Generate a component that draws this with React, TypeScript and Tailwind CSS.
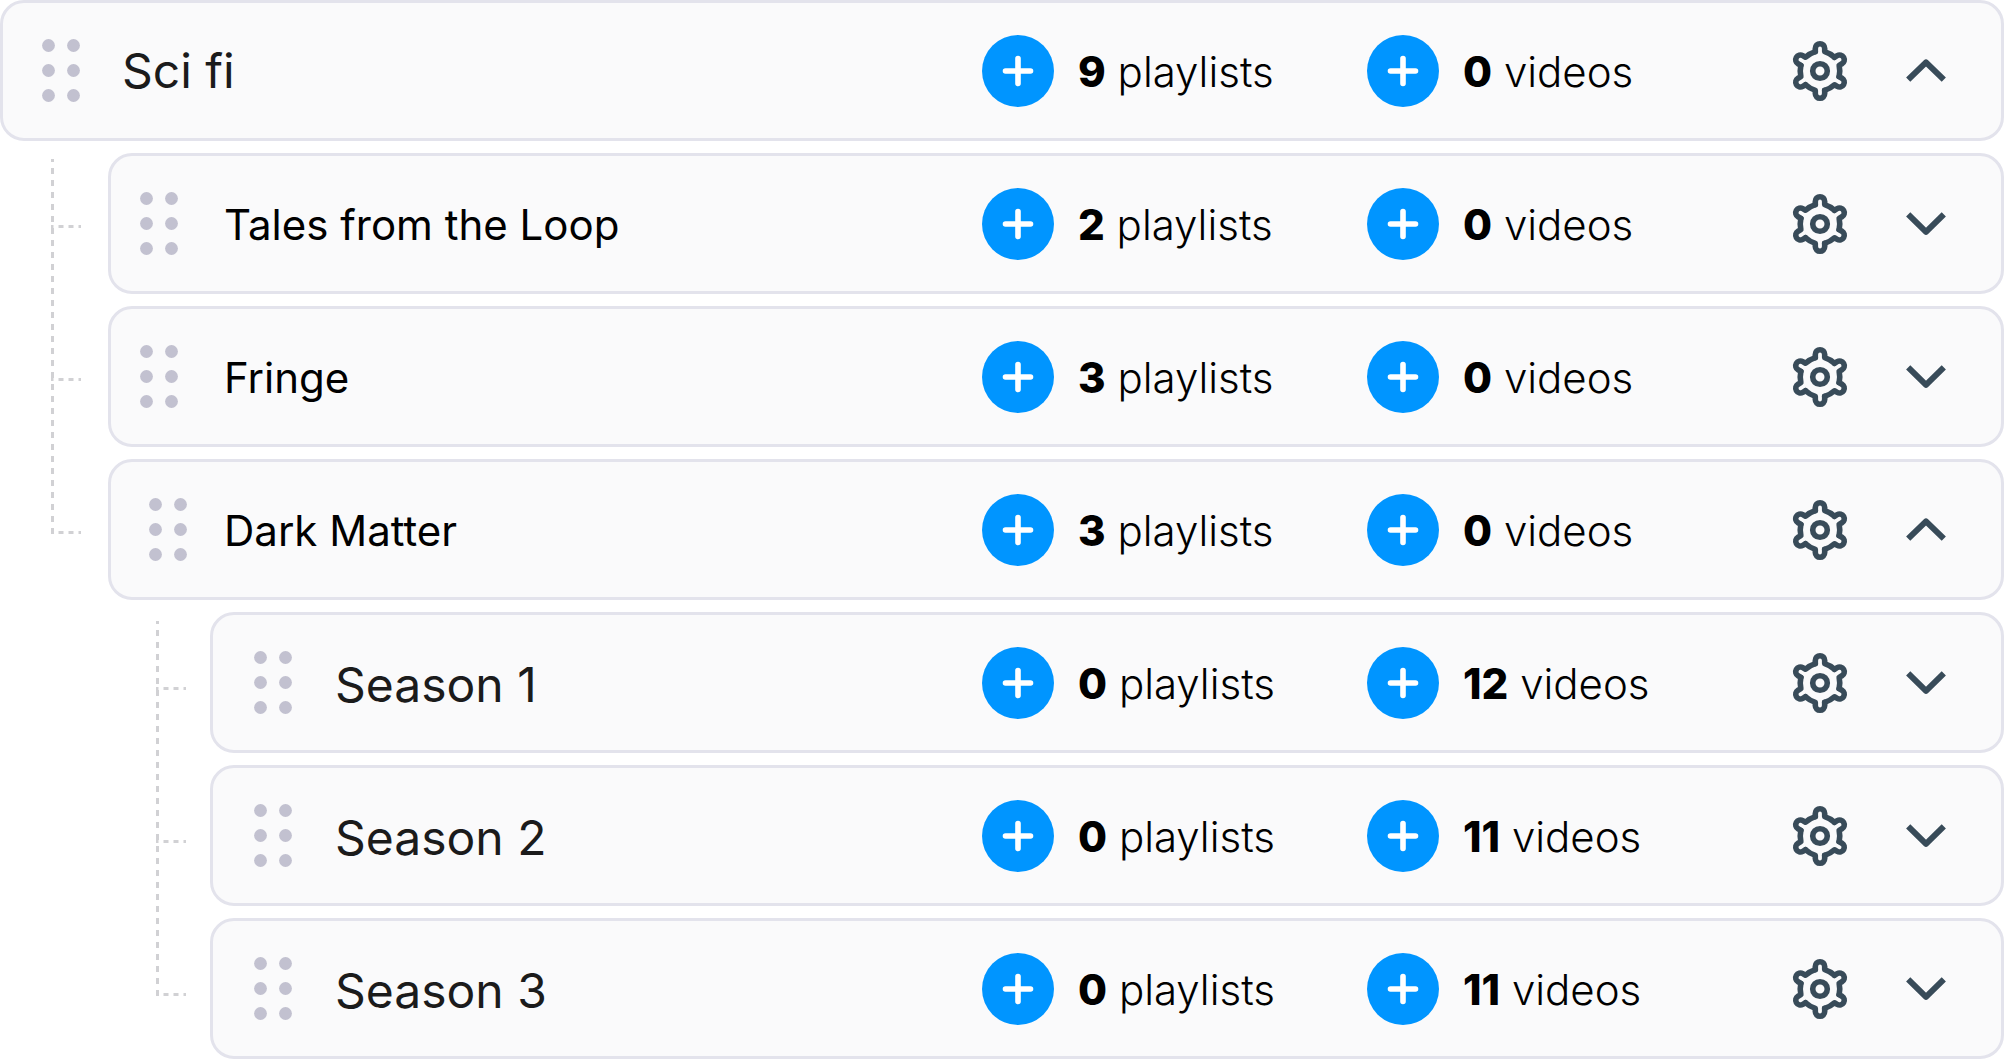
import { useState } from 'react'

type Folder = {
  name: string
  playlists: number
  videos: number
  open?: boolean
  children?: Folder[]
}

const library: Folder = {
  name: 'Sci fi',
  playlists: 9,
  videos: 0,
  open: true,
  children: [
    { name: 'Tales from the Loop', playlists: 2, videos: 0 },
    { name: 'Fringe', playlists: 3, videos: 0 },
    {
      name: 'Dark Matter',
      playlists: 3,
      videos: 0,
      open: true,
      children: [
        { name: 'Season 1', playlists: 0, videos: 12 },
        { name: 'Season 2', playlists: 0, videos: 11 },
        { name: 'Season 3', playlists: 0, videos: 11 },
      ],
    },
  ],
}

// row height plus the gap under it
const ROW_STEP = 153

const nameStyles = [
  'text-[48px] text-[#1b1b1b]',
  'text-[42px] text-black pt-0.5',
  'text-[48px] text-[#1b1b1b] pt-1',
]

// space before the name, measured from the inside of the card
const gripStyles = ['w-[119px] pl-[39px]', 'w-[113px] pl-[29px]', 'w-[122px] pl-[41px]']

const indentStyles = ['', 'w-[108px] pl-[51px]', 'w-[102px] pl-[48px]']

const GripIcon = () => (
  <svg width="38" height="63" viewBox="0 0 38 63" fill="#c2c1d0">
    {[6.5, 31.5].map(x =>
      [6.5, 31.5, 56.5].map(y => <circle key={`${x}-${y}`} cx={x} cy={y} r="6.4" />)
    )}
  </svg>
)

const PlusIcon = () => (
  <svg width="36" height="36" viewBox="0 0 36 36" stroke="#fff" strokeWidth="5.6" strokeLinecap="round">
    <path d="M18 5.5V30.5M5.5 18H30.5" />
  </svg>
)

const GearIcon = () => (
  <svg
    width="60"
    height="62"
    viewBox="-30 -31 60 62"
    fill="none"
    stroke="#384b59"
    strokeWidth="5.6"
    strokeLinecap="round"
    strokeLinejoin="round"
  >
    {[0, 60, 120, 180, 240, 300].map(angle => (
      <path
        key={angle}
        transform={`rotate(${angle})`}
        d="M-4.7 -19.4V-22.6A4.7 4.7 0 0 1 4.7 -22.6V-19.4A26 26 0 0 1 14.45 -13.77"
      />
    ))}
    <circle r="7.3" />
  </svg>
)

const ChevronIcon = ({ up }: { up: boolean }) => (
  <svg width="40" height="24" viewBox="0 0 40 24" fill="none" stroke="#384b59" strokeWidth="6" strokeLinejoin="round">
    <path d={up ? 'M2.2 20.6L20 3.4L37.8 20.6' : 'M2.2 2.4L20 19.8L37.8 2.4'} />
  </svg>
)

// Dashed tree lines to the left of a nested list
const Connector = ({ count, level }: { count: number; level: number }) => {
  const first = level === 1 ? 73.5 : 76.5
  const top = level === 1 ? 6 : 9
  const branches = Array.from({ length: count }, (_, i) => first + i * ROW_STEP)
  const bottom = branches[count - 1] + 1.5

  return (
    <div className={`shrink-0 ${indentStyles[level]}`} aria-hidden="true">
      <svg width="30" height={bottom} stroke="#d1d1d4" strokeWidth="3">
        <path d={`M1.5 ${top}V${bottom}`} strokeDasharray="6 6" strokeDashoffset="3" />
        {branches.map(y => (
          <path key={y} d={`M0 ${y}H30`} strokeDasharray="5 5" strokeDashoffset="2.5" />
        ))}
      </svg>
    </div>
  )
}

const Stat = ({ count, label }: { count: number; label: string }) => (
  <div className="flex items-center gap-6">
    <button
      aria-label={`Add ${label}`}
      className="flex size-[72px] shrink-0 items-center justify-center rounded-full bg-[#0095ff] cursor-pointer"
    >
      <PlusIcon />
    </button>
    <p className="pt-0.5 text-[42px] font-light whitespace-nowrap text-black">
      <span className="font-extrabold">{count}</span> {label}
    </p>
  </div>
)

function FolderItem({ folder, level }: { folder: Folder; level: number }) {
  const [open, setOpen] = useState(!!folder.open)
  const children = folder.children ?? []
  const gripStyle = children.length > 0 && level > 0 ? 'w-[113px] pl-[38px]' : gripStyles[level]

  return (
    <li className="flex flex-col gap-3">
      <div className="flex h-[141px] items-center rounded-3xl border-3 border-[#e3e3ec] bg-[#fafafb] pr-[55px]">
        <div className={`shrink-0 ${gripStyle}`}>
          <GripIcon />
        </div>
        <h2 className={`min-w-0 flex-1 truncate ${nameStyles[level]}`}>{folder.name}</h2>

        <div className="w-[385px] shrink-0">
          <Stat count={folder.playlists} label="playlists" />
        </div>
        <div className="w-[423px] shrink-0">
          <Stat count={folder.videos} label="videos" />
        </div>

        <div className="flex shrink-0 items-center gap-14">
          <button aria-label={`${folder.name} settings`} className="cursor-pointer">
            <GearIcon />
          </button>
          <button
            aria-label={open ? 'Collapse' : 'Expand'}
            aria-expanded={open}
            onClick={() => setOpen(!open)}
            className="cursor-pointer"
          >
            <ChevronIcon up={open} />
          </button>
        </div>
      </div>

      {open && children.length > 0 && (
        <div className="flex">
          <Connector count={children.length} level={level + 1} />
          <ul className="flex min-w-0 flex-1 flex-col gap-3">
            {children.map(child => (
              <FolderItem key={child.name} folder={child} level={level + 1} />
            ))}
          </ul>
        </div>
      )}
    </li>
  )
}

export default function App() {
  return (
    <main className="bg-white font-['Inter',sans-serif]">
      <ul>
        <FolderItem folder={library} level={0} />
      </ul>
    </main>
  )
}
